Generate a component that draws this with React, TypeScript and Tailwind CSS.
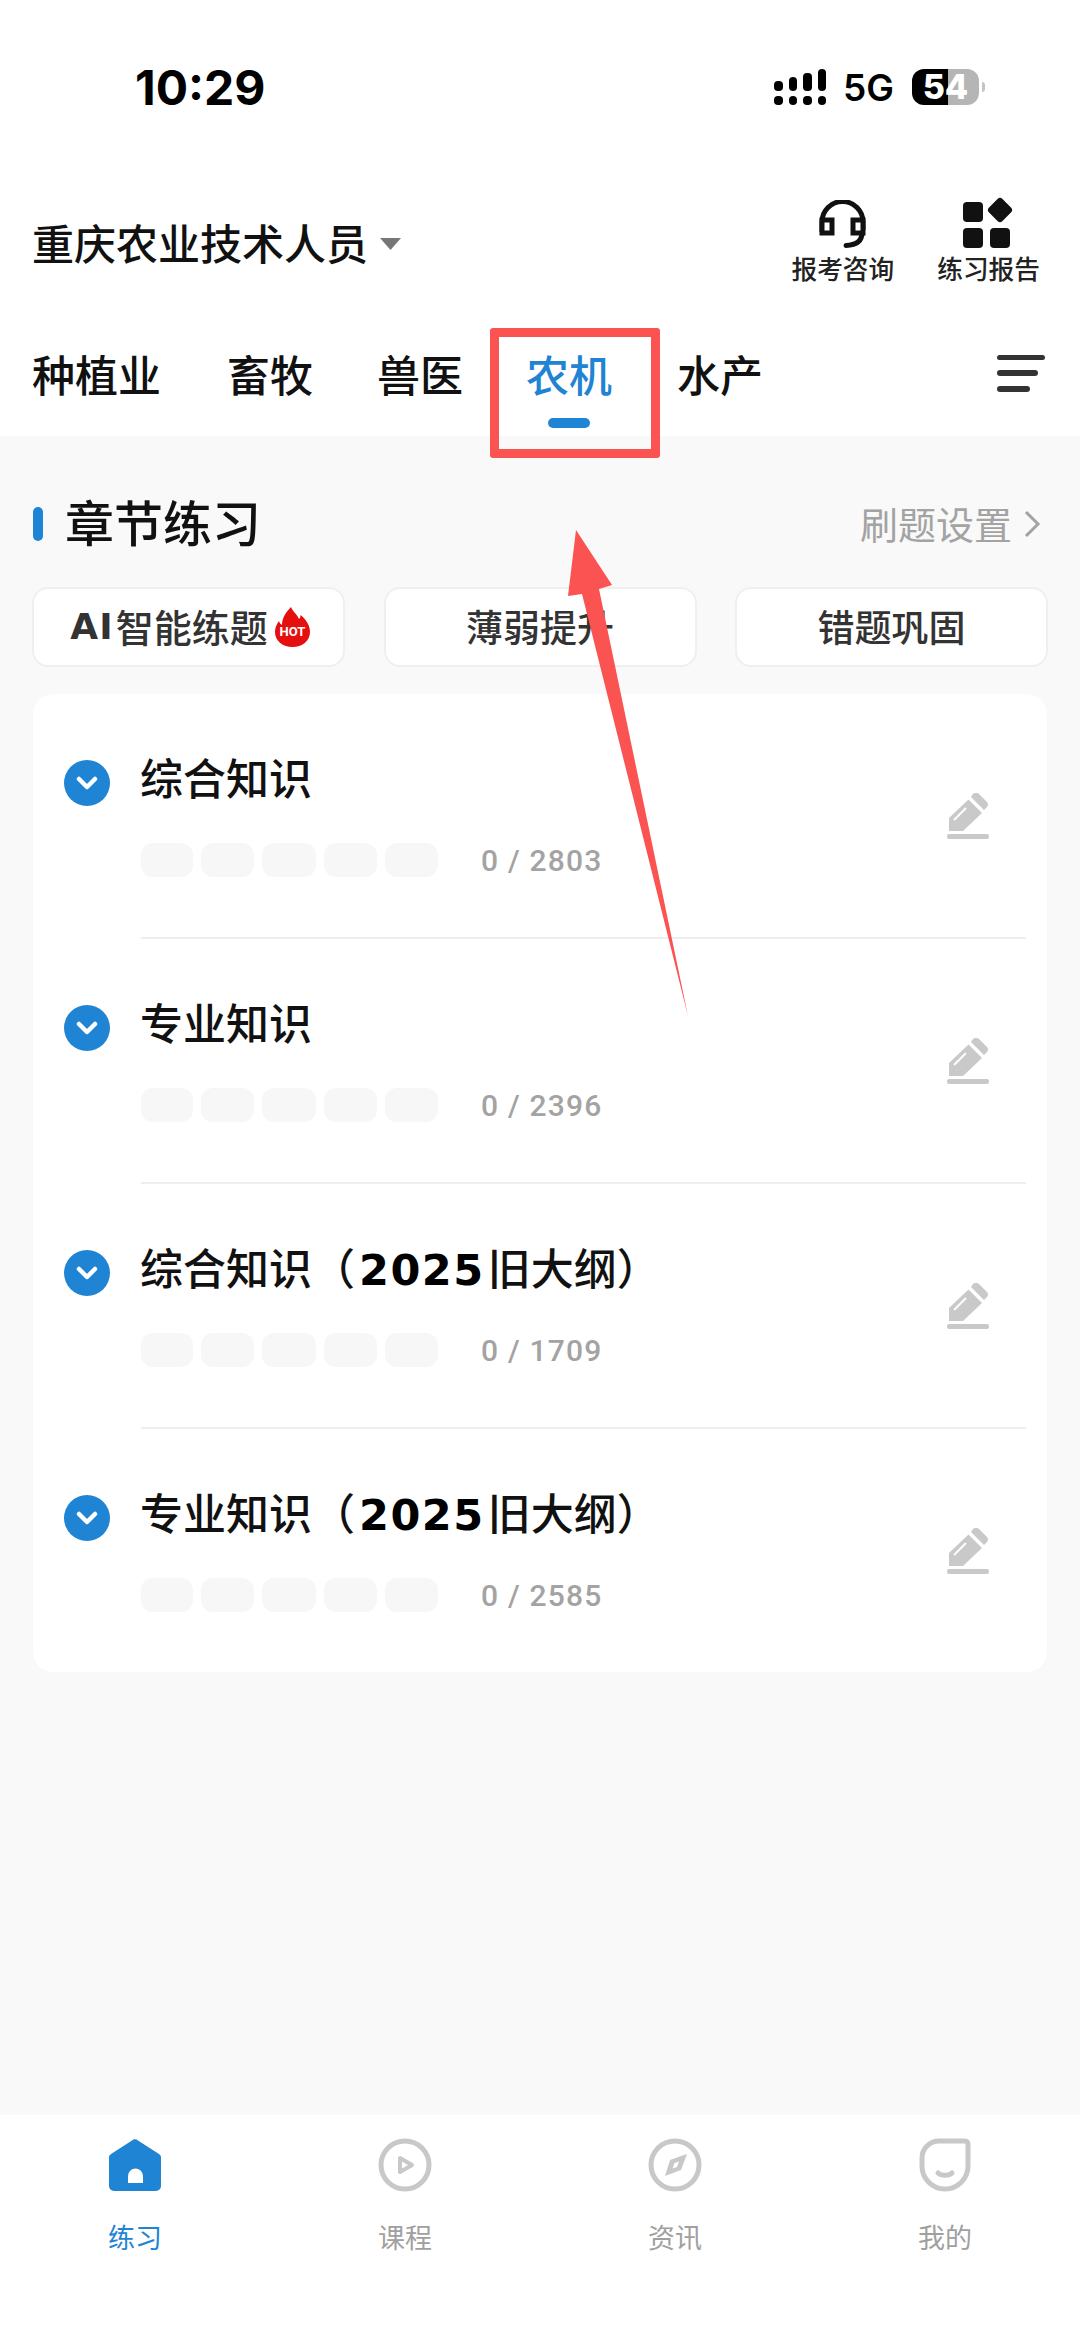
import React from "react";

const cjk = "font-['Noto_Sans_CJK_SC','Noto_Sans',sans-serif]";

function Signal() {
  const heights = ["h-[10px]", "h-[14px]", "h-[18px]", "h-[22px]"];
  return (
    <div className="flex gap-[6px]">
      {heights.map((h) => (
        <div key={h} className="flex h-[36px] w-[8.5px] flex-col justify-end gap-[5px]">
          <div className={`${h} rounded-[4px] bg-black`} />
          <div className="h-[9px] rounded-[4px] bg-black" />
        </div>
      ))}
    </div>
  );
}

function Headset() {
  return (
    <svg width="47" height="48" viewBox="0 0 47 48" fill="none" stroke="#111" strokeWidth="5">
      <path d="M3 32V22a20.5 20.5 0 0 1 41 0V30" />
      <rect x="3" y="20" width="10" height="13" fill="#fff" />
      <rect x="34" y="20" width="10" height="13" fill="#fff" />
      <path d="M43 33c0 8-6 12-16 12.5" strokeLinecap="round" />
    </svg>
  );
}

function GridIcon() {
  return (
    <svg className="overflow-visible" width="51" height="48" viewBox="0 1 51 48" fill="#111">
      <rect x="0" y="3" width="20" height="20" rx="4" />
      <rect x="0" y="29" width="20" height="20" rx="4" />
      <rect x="27" y="29" width="20" height="20" rx="4" />
      <rect x="27.5" y="1.5" width="19" height="19" rx="3.5" transform="rotate(45 37 11)" />
    </svg>
  );
}

function Flame() {
  return (
    <svg width="35" height="40" viewBox="0 0 35 40">
      <path
        d="M16 0c2 5 6 7 8 12 1-1 1.500-2 1.500-4 5 4 9.500 10 9.500 17 0 9-8 15-17.500 15S0 34 0 25c0-4 1.500-8 4-11 .5 2 1.500 3 3 4C7 11 11 5 16 0Z"
        fill="#e60f0f"
      />
      <text x="17.500" y="29" textAnchor="middle" fontSize="13" fontWeight="700" fill="#fff" fontFamily="Roboto, sans-serif">
        HOT
      </text>
    </svg>
  );
}

function ChevronBadge() {
  return (
    <div className="mt-[6px] flex h-[46px] w-[46px] shrink-0 items-center justify-center rounded-full bg-[#1f84d3]">
      <svg width="22" height="14" viewBox="0 0 22 14" fill="none" stroke="#fff" strokeWidth="4.500" strokeLinecap="round" strokeLinejoin="round">
        <path d="M3 3l8 8 8-8" />
      </svg>
    </div>
  );
}

function Pen() {
  return (
    <svg width="42" height="46" viewBox="0 0 42 46" fill="#c9c9c9">
      <path d="M29 0a4 4 0 0 1 3 1l8 8a4 4 0 0 1 0 5l-3 3L24 4l2-3a4 4 0 0 1 3-1Z" />
      <path d="M21.500 6.500 35 20 16 38H2V25Z" />
      <path d="M7 27 19 15" stroke="#fff" strokeWidth="2" />
      <rect x="0" y="41" width="42" height="5" rx="2" />
    </svg>
  );
}

function TitleText({ name, old }: { name: string; old?: boolean }) {
  return (
    <div className={`${cjk} -mt-[3px] -ml-[1px] h-[50px] text-[43px] leading-[50px] font-medium whitespace-nowrap text-[#111]`}>
      {name}
      {old && (
        <>
          （<span className="mr-[3px] ml-[4px] font-['DejaVu_Sans',sans-serif] text-[43px] leading-none font-bold tracking-[1.500px] text-black">2025</span>旧大纲）
        </>
      )}
    </div>
  );
}

function Row({ name, old, count, last }: { name: string; old?: boolean; count: string; last?: boolean }) {
  const pills = ["w-[52px]", "w-[53px]", "w-[54px]", "w-[53px]", "w-[53px]"];
  return (
    <div className={`flex items-start pt-[60px] pl-[31px] ${last ? "h-[243px]" : "h-[245px]"}`}>
      <ChevronBadge />
      <div className={`ml-[31px] mr-[21px] flex h-[185px] flex-1 items-start justify-between pr-[37px] ${last ? "" : "border-b-2 border-[#eeeeee]"}`}>
        <div>
          <TitleText name={name} old={old} />
          <div className="mt-[41px] flex items-center">
            <div className="flex gap-[8px]">
              {pills.map((w, i) => (
                <div key={i} className={`${w} h-[34px] rounded-[12px] bg-[#f7f7f7]`} />
              ))}
            </div>
            <span className="mt-[2px] ml-[43px] font-['Roboto',sans-serif] text-[30px] leading-[34px] font-medium tracking-[1.200px] text-[#a3a3a3]">
              {count}
            </span>
          </div>
        </div>
        <div className="mt-[39px]">
          <Pen />
        </div>
      </div>
    </div>
  );
}

function ActionButton({ children }: { children: React.ReactNode }) {
  return (
    <div className={`${cjk} flex h-[80px] w-[313px] items-center justify-center rounded-[16px] border-2 border-[#efefef] bg-white text-[37px] font-medium whitespace-nowrap text-[#333]`}>
      {children}
    </div>
  );
}

function NavItem({ label, active, icon }: { label: string; active?: boolean; icon: React.ReactNode }) {
  return (
    <div className="flex flex-col items-center pt-[23px]">
      <div className="flex h-[54px] items-center justify-center">{icon}</div>
      <div className={`${cjk} mt-[26px] text-[27px] leading-[38px] ${active ? "text-[#1f84d3]" : "text-[#a0a0a0]"}`}>{label}</div>
    </div>
  );
}

export default function App() {
  return (
    <div className={`${cjk} relative flex h-[2348px] w-[1080px] flex-col overflow-hidden bg-white`}>
      {/* status bar */}
      <div className="flex h-[174px] shrink-0 items-center justify-between pr-[95px] pl-[135px]">
        <span className="mt-[2px] font-['Inter',sans-serif] text-[48px] leading-none font-bold text-black">10:29</span>
        <div className="flex items-center">
          <Signal />
          <span className="ml-[17px] font-['Inter',sans-serif] text-[37px] leading-none font-semibold text-black">5G</span>
          <div className="ml-[18px] flex h-[36px] w-[67px] items-center justify-center rounded-[12px] bg-[linear-gradient(90deg,#000_54%,#b5b5b5_54%)] font-['Inter',sans-serif] text-[34px] leading-none font-extrabold text-white">
            54
          </div>
          <div className="ml-[3px] h-[10px] w-[3px] rounded-r-[3px] bg-[#c4c4c4]" />
        </div>
      </div>

      {/* header */}
      <div className="flex h-[140px] shrink-0 items-center justify-between pr-[40px] pl-[32px]">
        <div className="flex items-center">
          <span className="mb-[5px] text-[42px] leading-[50px] font-medium text-[#111]">重庆农业技术人员</span>
          <svg className="ml-[12px]" width="21" height="12" viewBox="0 0 21 12" fill="#777">
            <path d="M0 0h21L10.500 12Z" />
          </svg>
        </div>
        <div className="flex gap-[43px]">
          <div className="flex flex-col items-center">
            <Headset />
            <span className="mt-[2px] mb-[3px] text-[25.700px] leading-[36px] font-medium text-[#222]">报考咨询</span>
          </div>
          <div className="flex flex-col items-center">
            <GridIcon />
            <span className="mt-[2px] mb-[3px] text-[25.700px] leading-[36px] font-medium text-[#222]">练习报告</span>
          </div>
        </div>
      </div>

      {/* tabs */}
      <div className="flex h-[122px] shrink-0 items-start gap-[66px] pt-[29px] pr-[35px] pl-[32px] text-[43px] leading-[60px] font-medium text-[#111]">
        <span className="w-[129px]">种植业</span>
        <span className="w-[84px] whitespace-nowrap">畜牧</span>
        <span className="w-[84px] whitespace-nowrap">兽医</span>
        <div className="flex w-[84px] flex-col items-center">
          <span className="whitespace-nowrap text-[#1f84d3]">农机</span>
          <div className="mt-[15px] h-[10px] w-[42px] rounded-full bg-[#1f84d3]" />
        </div>
        <span className="whitespace-nowrap">水产</span>
        <div className="mt-[12px] ml-auto flex w-[48px] flex-col gap-[10px]">
          <div className="h-[5px] w-[48px] rounded-full bg-[#333]" />
          <div className="h-[6px] w-[41px] rounded-full bg-[#333]" />
          <div className="h-[6px] w-[33px] rounded-full bg-[#333]" />
        </div>
      </div>

      {/* main */}
      <div className="flex-1 bg-[#f9f9f9] px-[33px] pt-[58px]">
        <div className="flex h-[60px] items-center justify-between">
          <div className="flex items-center">
            <div className="h-[34px] w-[10px] rounded-full bg-[#1f84d3]" />
            <span className="mb-[6px] ml-[22px] text-[49px] leading-[60px] font-medium text-[#111]">章节练习</span>
          </div>
          <div className="flex items-center pr-[6px]">
            <span className="mb-[3px] text-[38px] leading-[50px] text-[#a3a3a3]">刷题设置</span>
            <svg className="ml-[11px]" width="18" height="28" viewBox="0 0 18 28" fill="none" stroke="#a3a3a3" strokeWidth="3">
              <path d="M3 2l12 12L3 26" />
            </svg>
          </div>
        </div>

        <div className="-mx-[1px] mt-[33px] flex justify-between">
          <ActionButton>
            <span className="ml-[3px] font-['DejaVu_Sans',sans-serif] text-[36px] font-bold tracking-[1px]">AI</span>
            <span className="mr-[7px] mb-[3px] ml-[2px] text-[38px]">智能练题</span>
            <Flame />
          </ActionButton>
          <ActionButton>薄弱提升</ActionButton>
          <ActionButton>错题巩固</ActionButton>
        </div>

        <div className="mt-[27px] rounded-[20px] bg-white">
          <Row name="综合知识" count="0 / 2803" />
          <Row name="专业知识" count="0 / 2396" />
          <Row name="综合知识" old count="0 / 1709" />
          <Row name="专业知识" old count="0 / 2585" last />
        </div>
      </div>

      {/* bottom nav */}
      <div className="grid h-[233px] shrink-0 grid-cols-4 bg-white">
        <NavItem
          label="练习"
          active
          icon={
            <svg width="52" height="52" viewBox="0 0 52 52">
              <path d="M23 1.500a4 4 0 0 1 6 0L50 15a5 5 0 0 1 2 5v27a5 5 0 0 1-5 5H5a5 5 0 0 1-5-5V20a5 5 0 0 1 2-5Z" fill="#1f84d3" />
              <path d="M19 44V37a7.500 7.500 0 0 1 15 0v7Z" fill="#fff" />
            </svg>
          }
        />
        <NavItem
          label="课程"
          icon={
            <svg width="54" height="54" viewBox="0 0 54 54" fill="none" stroke="#c8c8c8" strokeWidth="5">
              <circle cx="27" cy="27" r="24" />
              <path d="M22 20 34 27 22 34Z" strokeLinejoin="round" strokeWidth="4" />
            </svg>
          }
        />
        <NavItem
          label="资讯"
          icon={
            <svg width="54" height="54" viewBox="0 0 54 54" fill="none" stroke="#c8c8c8" strokeWidth="5">
              <circle cx="27" cy="27" r="24" />
              <path d="M39 16 33 32 17 38 22 22Z" fill="#c8c8c8" stroke="none" />
              <path d="M31 23.500 26.500 25 24.500 30.500 29 29Z" fill="#fff" stroke="none" />
            </svg>
          }
        />
        <NavItem
          label="我的"
          icon={
            <svg width="52" height="54" viewBox="0 0 52 54" fill="none" stroke="#c8c8c8" strokeWidth="5">
              <path d="M20 3h26a3 3 0 0 1 3 3v22a23 23 0 0 1-46 0V20A17 17 0 0 1 20 3Z" />
              <path d="M19 35c3 3 11 3 14 0" strokeWidth="5" strokeLinecap="round" />
            </svg>
          }
        />
      </div>

      {/* annotation overlay */}
      <div className="absolute top-[328px] left-[490px] h-[130px] w-[170px] rounded-[3px] border-[9px] border-[#fb5252]" />
      <svg className="absolute top-0 left-0" width="1080" height="2348" viewBox="0 0 1080 2348">
        <path d="M576 530 612 585 599 589 688 1016 582 594 568 596Z" fill="#fb5252" />
      </svg>
    </div>
  );
}
